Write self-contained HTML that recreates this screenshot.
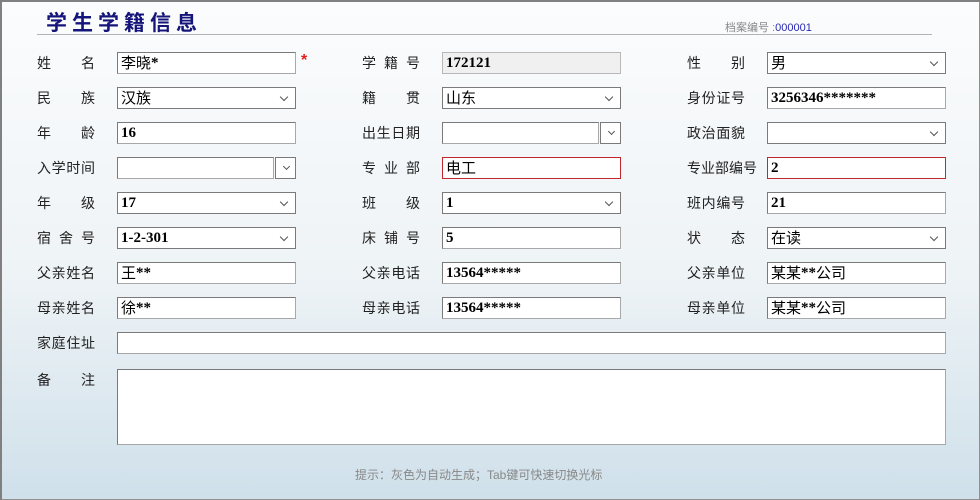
<!DOCTYPE html>
<html><head><meta charset="utf-8"><style>
*{margin:0;padding:0;box-sizing:border-box}
body{width:980px;height:500px;overflow:hidden;font-family:"Liberation Sans","Noto Sans CJK SC",sans-serif}
#p{position:absolute;left:0;top:0;width:980px;height:500px;box-shadow:inset 2px 2px 0 #808080,inset -1px -1px 0 #909090;background:linear-gradient(#fbfcfd 0%,#eef3f6 55%,#cfe0ea 100%)}
.t{position:absolute;left:46px;top:7px;font-size:21px;font-weight:bold;color:#14147a;letter-spacing:5px}
.hr{position:absolute;left:37px;top:34px;width:895px;height:1px;background:#b0b4b8}
.no{position:absolute;left:725px;top:19px;font-size:11px;color:#888}
.no b{color:#2a2ab0;font-weight:normal}
.l{position:absolute;width:58px;font-size:14px;color:#222;text-align:justify;text-align-last:justify;line-height:22px;white-space:nowrap}
.i{position:absolute;height:22px;width:179px;background:#fff;border:1px solid #a8a8a8;border-top-color:#7a7a7a;border-left-color:#7a7a7a;font:bold 15px "Liberation Serif","Noto Sans CJK SC",serif;line-height:20px;padding-left:3px;color:#000;white-space:nowrap;overflow:hidden}
.i span{display:inline-block;vertical-align:top;line-height:20px;height:20px;font:normal 15px/20px "Noto Sans CJK SC",sans-serif}
.s{border:1px solid #7a7a7a;overflow:visible}
.s::after{content:"";position:absolute;right:8px;top:6px;width:5px;height:5px;border-right:1px solid #555;border-bottom:1px solid #555;transform:rotate(45deg)}
.r{border:1px solid #c0282d}
.g{background:#f0f0f0;border-color:#b8b8b8}
.d{width:157px}
.db{position:absolute;width:21px;height:22px;border:1px solid #7a7a7a;background:#fff}
.db::after{content:"";position:absolute;right:6px;top:6px;width:4px;height:4px;border-right:1px solid #555;border-bottom:1px solid #555;transform:rotate(45deg)}
.star{position:absolute;left:301px;top:52px;color:#e02020;font-weight:bold;font-size:16px}
.hint{position:absolute;left:355px;top:466px;font-size:12px;color:#888}
</style></head><body><div id="p">
<div class="t">学生学籍信息</div><div class="hr"></div>
<div class="no">档案编号 :<b>000001</b></div>

<div class="l" style="left:37px;top:52px">姓名</div><div class="i" style="left:117px;top:52px"><span>李晓</span>*</div><div class="star">*</div>
<div class="l" style="left:362px;top:52px">学籍号</div><div class="i g" style="left:442px;top:52px">172121</div>
<div class="l" style="left:687px;top:52px">性别</div><div class="i s" style="left:767px;top:52px"><span>男</span></div>

<div class="l" style="left:37px;top:87px">民族</div><div class="i s" style="left:117px;top:87px"><span>汉族</span></div>
<div class="l" style="left:362px;top:87px">籍贯</div><div class="i s" style="left:442px;top:87px"><span>山东</span></div>
<div class="l" style="left:687px;top:87px">身份证号</div><div class="i" style="left:767px;top:87px">3256346*******</div>

<div class="l" style="left:37px;top:122px">年龄</div><div class="i" style="left:117px;top:122px">16</div>
<div class="l" style="left:362px;top:122px">出生日期</div><div class="i d" style="left:442px;top:122px"></div><div class="db" style="left:600px;top:122px"></div>
<div class="l" style="left:687px;top:122px">政治面貌</div><div class="i s" style="left:767px;top:122px"></div>

<div class="l" style="left:37px;top:157px">入学时间</div><div class="i d" style="left:117px;top:157px"></div><div class="db" style="left:275px;top:157px"></div>
<div class="l" style="left:362px;top:157px">专业部</div><div class="i r" style="left:442px;top:157px"><span>电工</span></div>
<div class="l" style="left:687px;top:157px">专业部编号</div><div class="i r" style="left:767px;top:157px">2</div>

<div class="l" style="left:37px;top:192px">年级</div><div class="i s" style="left:117px;top:192px">17</div>
<div class="l" style="left:362px;top:192px">班级</div><div class="i s" style="left:442px;top:192px">1</div>
<div class="l" style="left:687px;top:192px">班内编号</div><div class="i" style="left:767px;top:192px">21</div>

<div class="l" style="left:37px;top:227px">宿舍号</div><div class="i s" style="left:117px;top:227px">1-2-301</div>
<div class="l" style="left:362px;top:227px">床铺号</div><div class="i" style="left:442px;top:227px">5</div>
<div class="l" style="left:687px;top:227px">状态</div><div class="i s" style="left:767px;top:227px"><span>在读</span></div>

<div class="l" style="left:37px;top:262px">父亲姓名</div><div class="i" style="left:117px;top:262px"><span>王</span>**</div>
<div class="l" style="left:362px;top:262px">父亲电话</div><div class="i" style="left:442px;top:262px">13564*****</div>
<div class="l" style="left:687px;top:262px">父亲单位</div><div class="i" style="left:767px;top:262px"><span>某某</span>**<span>公司</span></div>

<div class="l" style="left:37px;top:297px">母亲姓名</div><div class="i" style="left:117px;top:297px"><span>徐</span>**</div>
<div class="l" style="left:362px;top:297px">母亲电话</div><div class="i" style="left:442px;top:297px">13564*****</div>
<div class="l" style="left:687px;top:297px">母亲单位</div><div class="i" style="left:767px;top:297px"><span>某某</span>**<span>公司</span></div>

<div class="l" style="left:37px;top:332px">家庭住址</div><div class="i" style="left:117px;top:332px;width:829px"></div>
<div class="l" style="left:37px;top:369px">备注</div><div class="i" style="left:117px;top:369px;width:829px;height:76px"></div>

<div class="hint">提示：灰色为自动生成；Tab键可快速切换光标</div>
</div></body></html>
